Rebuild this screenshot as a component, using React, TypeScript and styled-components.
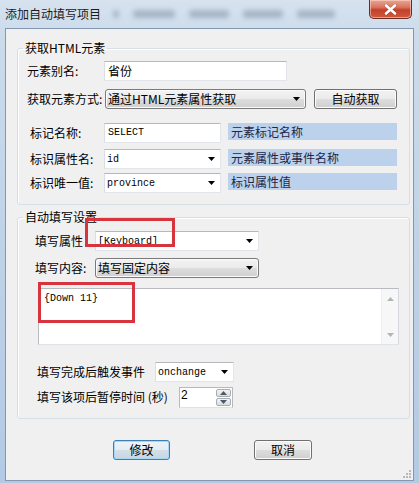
import React from 'react';
import styled, { createGlobalStyle, css } from 'styled-components';

const GlobalStyle = createGlobalStyle`
  html, body { margin: 0; padding: 0; background: #bfd2e8; }
  body {
    font-family: "Noto Sans CJK SC", "Noto Sans", sans-serif;
    font-size: 12px;
    color: #000;
  }
  * { box-sizing: border-box; }
`;

const CJK = `"Noto Sans CJK SC", "Noto Sans", sans-serif`;
const MONO = `"Liberation Mono", "DejaVu Sans Mono", monospace`;

const Window = styled.div`
  width: 419px;
  height: 483px;
  display: flex;
  flex-direction: column;
  background: linear-gradient(to bottom, #d6e2ee 0%, #cbdbeb 8%, #bcd1e7 60%, #b3cae4 100%);
  overflow: hidden;
`;

const TitleBar = styled.div`
  height: 28px;
  flex: none;
  display: flex;
  align-items: flex-start;
  padding-left: 5px;
`;

const TitleText = styled.div`
  margin-top: 7px;
  line-height: 14px;
  font-size: 12px;
  color: #1a1a1a;
  white-space: nowrap;
`;

const Smudges = styled.div`
  display: flex;
  align-items: center;
  margin-top: 10px;
  margin-left: 12px;
  gap: 14px;
  filter: blur(2.5px);
  opacity: 0.35;
`;

const Smudge = styled.div<{ $w: number }>`
  width: ${(p) => p.$w}px;
  height: 8px;
  border-radius: 3px;
  background: #55677d;
`;

const CloseButton = styled.div`
  margin-left: auto;
  margin-right: 7px;
  width: 43px;
  height: 19px;
  flex: none;
  border: 1px solid #6b2a22;
  border-top: none;
  border-radius: 0 0 5px 5px;
  background: linear-gradient(to bottom, #e9a593 0%, #d9755f 40%, #c2402a 55%, #cf5a3e 100%);
  box-shadow: inset 0 0 0 1px rgba(255, 220, 210, 0.55);
  display: flex;
  align-items: center;
  justify-content: center;
`;

const Client = styled.div`
  flex: 1;
  margin: 0 5px 2px 5px;
  background: #f0f0f0;
  border: 1px solid #8398b0;
  padding: 12px 3px 0 11px;
  display: flex;
  flex-direction: column;
  position: relative;
`;

const Group = styled.fieldset<{ $mt?: number }>`
  margin: ${(p) => p.$mt ?? 0}px 0 0 0;
  padding: 0;
  border: 1px solid #d5dfe5;
  border-radius: 3px;
  box-shadow: inset 1px 1px 0 #ffffff;
  min-width: 0;
`;

const Legend = styled.legend`
  margin-left: 5px;
  padding: 0 2px;
  line-height: 14px;
  font-size: 12px;
  color: #000;
`;

const GroupBody = styled.div<{ $pt: number; $pb: number }>`
  display: flex;
  flex-direction: column;
  padding-top: ${(p) => p.$pt}px;
  padding-bottom: ${(p) => p.$pb}px;
`;

const Row = styled.div<{ $mt?: number; $pl: number }>`
  display: flex;
  align-items: flex-start;
  height: 20px;
  margin-top: ${(p) => p.$mt ?? 0}px;
  padding-left: ${(p) => p.$pl}px;
`;

const Label = styled.div<{ $w: number }>`
  width: ${(p) => p.$w}px;
  flex: none;
  line-height: 20px;
  font-size: 12px;
  white-space: nowrap;
  color: #000;
`;

const fieldBorder = css`
  border: 1px solid #e2e6ea;
  border-top-color: #b5b8bd;
  border-left-color: #dadde1;
`;

const TextBox = styled.div<{ $w: number; $mono?: boolean }>`
  width: ${(p) => p.$w}px;
  height: 20px;
  flex: none;
  background: #fff;
  ${fieldBorder};
  padding: 0 3px;
  line-height: 18px;
  white-space: nowrap;
  font-family: ${(p) => (p.$mono ? MONO : CJK)};
  font-size: ${(p) => (p.$mono ? '10px' : '12px')};
`;

const WhiteCombo = styled.div<{ $w: number }>`
  width: ${(p) => p.$w}px;
  height: 20px;
  flex: none;
  background: #fff;
  ${fieldBorder};
  display: flex;
  align-items: center;
  justify-content: space-between;
  padding: 0 5px 0 2px;
  font-family: ${MONO};
  font-size: 10px;
  white-space: nowrap;
`;

const GrayCombo = styled.div<{ $w: number }>`
  width: ${(p) => p.$w}px;
  height: 20px;
  flex: none;
  border: 1px solid #7a7a7a;
  border-radius: 3px;
  background: linear-gradient(to bottom, #f3f3f3 0%, #ebebeb 48%, #dddddd 52%, #cfcfcf 100%);
  box-shadow: inset 0 0 0 1px #fbfbfb;
  display: flex;
  align-items: center;
  justify-content: space-between;
  padding: 0 5px 0 2px;
  font-size: 12px;
  line-height: 18px;
  white-space: nowrap;
`;

const PushButton = styled.div<{ $w: number; $default?: boolean }>`
  width: ${(p) => p.$w}px;
  height: 20px;
  flex: none;
  border: 1px solid #707070;
  border-radius: 3px;
  background: linear-gradient(to bottom, #f2f2f2 0%, #ebebeb 48%, #dddddd 52%, #cfcfcf 100%);
  box-shadow: inset 0 0 0 1px #fcfcfc;
  display: flex;
  align-items: center;
  justify-content: center;
  font-size: 12px;
  line-height: 18px;
  color: #000;
  ${(p) =>
    p.$default &&
    css`
      border-color: #3c7fb1;
      box-shadow: inset 0 0 0 1px #a6d8f5;
      background: linear-gradient(to bottom, #eef4f8 0%, #e4edf3 48%, #d3dfe8 52%, #c8d6e1 100%);
    `}
`;

const BlueTag = styled.div<{ $w: number }>`
  width: ${(p) => p.$w}px;
  height: 17px;
  flex: none;
  margin-left: 7px;
  background: #bcd1ec;
  color: #1b2746;
  padding-left: 3px;
  line-height: 17px;
  font-size: 12px;
  white-space: nowrap;
`;

const Memo = styled.div`
  margin-left: 20px;
  width: 361px;
  height: 57px;
  flex: none;
  background: #fff;
  border: 1px solid #b8bbc0;
  border-bottom-color: #dfe3e7;
  border-right-color: #d5d9de;
  display: flex;
`;

const MemoText = styled.div`
  flex: 1;
  padding: 3px 5px;
  font-family: ${MONO};
  font-size: 10px;
  line-height: 13px;
  white-space: pre;
`;

const ScrollBar = styled.div`
  width: 17px;
  flex: none;
  background: #f7f7f7;
  border-left: 1px solid #f0f0f0;
  display: flex;
  flex-direction: column;
  justify-content: space-between;
  align-items: center;
  padding: 8px 0 7px;
`;

const Spin = styled.div`
  width: 54px;
  height: 21px;
  flex: none;
  background: #fff;
  border: 1px solid #b5b8bd;
  border-bottom-color: #dfe3e7;
  display: flex;
`;

const SpinValue = styled.div`
  flex: 1;
  padding: 0 1px;
  font-family: "Liberation Sans", Arial, sans-serif;
  font-size: 12px;
  line-height: 14px;
`;

const SpinButtons = styled.div`
  width: 16px;
  flex: none;
  display: flex;
  flex-direction: column;
  gap: 1px;
  padding: 1px 1px 1px 0;
`;

const SpinBtn = styled.div`
  flex: 1;
  border: 1px solid #a8adb3;
  border-radius: 2px;
  background: linear-gradient(to bottom, #f4f4f4, #dcdcdc);
  display: flex;
  align-items: center;
  justify-content: center;
`;

const ButtonBar = styled.div`
  display: flex;
  margin-top: 21px;
  padding-left: 96px;
  gap: 84px;
`;

const RedMark = styled.div<{ $l: number; $t: number; $w: number; $h: number }>`
  position: absolute;
  left: ${(p) => p.$l}px;
  top: ${(p) => p.$t}px;
  width: ${(p) => p.$w}px;
  height: ${(p) => p.$h}px;
  border: 3px solid #d8343e;
  pointer-events: none;
`;

const Grip = styled.svg`
  position: absolute;
  right: 1px;
  bottom: 1px;
`;

const Arrow = ({ color = '#000', up = false }: { color?: string; up?: boolean }) => (
  <svg width="7" height="4" viewBox="0 0 7 4" style={{ flex: 'none' }}>
    <polygon points={up ? '0,4 7,4 3.5,0' : '0,0 7,0 3.5,4'} fill={color} />
  </svg>
);

export default function App() {
  return (
    <>
      <GlobalStyle />
      <Window>
        <TitleBar>
          <TitleText>添加自动填写项目</TitleText>
          <Smudges>
            <Smudge $w={6} />
            <Smudge $w={42} />
            <Smudge $w={40} />
            <Smudge $w={40} />
            <Smudge $w={38} />
          </Smudges>
          <CloseButton>
            <svg width="13" height="11" viewBox="0 0 13 11">
              <path d="M2 1.5 L11 9.5 M11 1.5 L2 9.5" stroke="#5a1a12" strokeWidth="3.6" strokeLinecap="round" opacity="0.35" />
              <path d="M2 1.5 L11 9.5 M11 1.5 L2 9.5" stroke="#ffffff" strokeWidth="2.6" strokeLinecap="round" />
            </svg>
          </CloseButton>
        </TitleBar>
        <Client>
          <Group>
            <Legend>获取HTML元素</Legend>
            <GroupBody $pt={6} $pb={11}>
              <Row $pl={9}>
                <Label $w={77}>元素别名:</Label>
                <TextBox $w={183}>省份</TextBox>
              </Row>
              <Row $pl={9} $mt={8}>
                <Label $w={78}>获取元素方式:</Label>
                <GrayCombo $w={201}>
                  <span>通过HTML元素属性获取</span>
                  <Arrow />
                </GrayCombo>
                <PushButton $w={83} style={{ marginLeft: 8 }}>自动获取</PushButton>
              </Row>
              <Row $pl={12} $mt={14}>
                <Label $w={74}>标记名称:</Label>
                <TextBox $w={117} $mono>SELECT</TextBox>
                <BlueTag $w={169}>元素标记名称</BlueTag>
              </Row>
              <Row $pl={12} $mt={6}>
                <Label $w={74}>标识属性名:</Label>
                <WhiteCombo $w={117}>
                  <span>id</span>
                  <Arrow />
                </WhiteCombo>
                <BlueTag $w={169}>元素属性或事件名称</BlueTag>
              </Row>
              <Row $pl={12} $mt={4}>
                <Label $w={74}>标识唯一值:</Label>
                <WhiteCombo $w={117}>
                  <span>province</span>
                  <Arrow />
                </WhiteCombo>
                <BlueTag $w={169}>标识属性值</BlueTag>
              </Row>
            </GroupBody>
          </Group>
          <Group $mt={5}>
            <Legend>自动填写设置</Legend>
            <GroupBody $pt={7} $pb={11}>
              <Row $pl={17}>
                <Label $w={60}>填写属性</Label>
                <WhiteCombo $w={164}>
                  <span>[Keyboard]</span>
                  <Arrow />
                </WhiteCombo>
              </Row>
              <Row $pl={17} $mt={7}>
                <Label $w={60}>填写内容:</Label>
                <GrayCombo $w={164}>
                  <span>填写固定内容</span>
                  <Arrow />
                </GrayCombo>
              </Row>
              <Memo style={{ marginTop: 10 }}>
                <MemoText>{'{Down 11}'}</MemoText>
                <ScrollBar>
                  <Arrow up color="#b4b4b4" />
                  <Arrow color="#b4b4b4" />
                </ScrollBar>
              </Memo>
              <Row $pl={19} $mt={17}>
                <Label $w={118}>填写完成后触发事件</Label>
                <WhiteCombo $w={79}>
                  <span>onchange</span>
                  <Arrow />
                </WhiteCombo>
              </Row>
              <Row $pl={19} $mt={5}>
                <Label $w={142}>填写该项后暂停时间 (秒)</Label>
                <Spin>
                  <SpinValue>2</SpinValue>
                  <SpinButtons>
                    <SpinBtn>
                      <Arrow up color="#4a5a6a" />
                    </SpinBtn>
                    <SpinBtn>
                      <Arrow color="#4a5a6a" />
                    </SpinBtn>
                  </SpinButtons>
                </Spin>
              </Row>
            </GroupBody>
          </Group>
          <ButtonBar>
            <PushButton $w={57} $default>修改</PushButton>
            <PushButton $w={58}>取消</PushButton>
          </ButtonBar>
          <RedMark $l={79} $t={189} $w={90} $h={29} />
          <RedMark $l={32} $t={253} $w={97} $h={41} />
          <Grip width="10" height="10" viewBox="0 0 10 10">
            {[
              [8, 2],
              [8, 5],
              [8, 8],
              [5, 5],
              [5, 8],
              [2, 8],
            ].map(([x, y], i) => (
              <rect key={i} x={x - 1} y={y - 1} width="2" height="2" fill="#b8b8b8" />
            ))}
          </Grip>
        </Client>
      </Window>
    </>
  );
}
